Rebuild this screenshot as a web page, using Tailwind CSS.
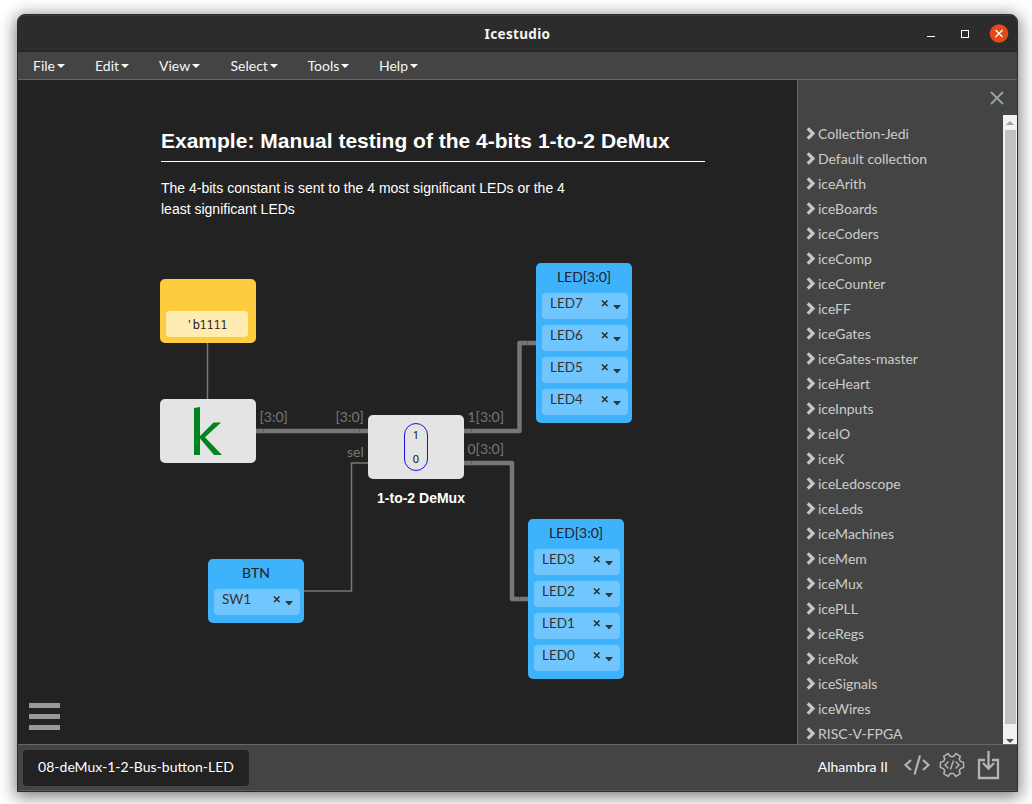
<!DOCTYPE html>
<html lang="en">
<head>
<meta charset="utf-8">
<title>Icestudio</title>
<script src="https://cdn.jsdelivr.net/npm/@tailwindcss/browser@4"></script>
</head>
<body class="bg-white w-[1032px] h-[804px] overflow-hidden pt-[14px] pl-[17px] font-['Lato',sans-serif] text-[14px]">
<svg class="hidden">
  <symbol id="chev" viewBox="0 0 9 13"><path d="M1.800 1.300 7 6.500 1.800 11.700" fill="none" stroke="#c6c6c6" stroke-width="3.300"/></symbol>
</svg>
<div class="w-[1001px] h-[778px] flex flex-col rounded-t-[8px] overflow-hidden border border-[#2b2b2b] bg-[#444] shadow-[0_3px_16px_2px_rgba(0,0,0,0.5)]">
  <header class="h-[37px] shrink-0 bg-[#2c2c2c] border-t border-[#3a3a3a] border-b border-b-[#232323] grid grid-cols-[1fr_auto_1fr] items-center">
    <div></div>
    <h1 class="pt-px font-['Noto_Sans',sans-serif] font-bold text-[13.500px] tracking-[0.350px] text-[#f4f4f4]">Icestudio</h1>
    <svg class="justify-self-end mr-[8px]" width="84" height="20" viewBox="925 23.500 84 20">
      <path d="M927 36h8" stroke="#fff"/>
      <rect x="961.500" y="30" width="7" height="7" fill="none" stroke="#fff"/>
      <circle cx="999" cy="33" r="9.300" fill="#e24a18"/>
      <path d="M995.500 29.500l7 7M1002.500 29.500l-7 7" stroke="#fff" stroke-width="1.400"/>
    </svg>
  </header>
  <nav class="h-[28px] shrink-0 border-b border-[#666] flex items-center text-[#f4f4f4] pl-[15px]">
    <div class="w-[62px] flex items-center gap-[2px]">File<i class="mt-px border-x-4 border-x-transparent border-t-4 border-t-white"></i></div>
    <div class="w-[64px] flex items-center gap-[2px]">Edit<i class="mt-px border-x-4 border-x-transparent border-t-4 border-t-white"></i></div>
    <div class="w-[71.500px] flex items-center gap-[2px]">View<i class="mt-px border-x-4 border-x-transparent border-t-4 border-t-white"></i></div>
    <div class="w-[77px] flex items-center gap-[2px]">Select<i class="mt-px border-x-4 border-x-transparent border-t-4 border-t-white"></i></div>
    <div class="w-[71.500px] flex items-center gap-[2px]">Tools<i class="mt-px border-x-4 border-x-transparent border-t-4 border-t-white"></i></div>
    <div class="flex items-center gap-[2px]">Help<i class="mt-px border-x-4 border-x-transparent border-t-4 border-t-white"></i></div>
  </nav>
  <main class="h-[664px] shrink-0 flex">
    <section class="relative w-[779px] bg-[#222] overflow-hidden">
      <svg class="absolute inset-0" width="779" height="664" viewBox="18 80 779 664" fill="none">
        <g stroke="#777">
          <path d="M207.500 342V400M303 591H351.500V463H369" stroke-width="1.500"/>
          <path d="M255 431H369M463 431H519.500V343H537M463 463H512V599H529" stroke-width="4.500" stroke-linejoin="round"/>
        </g>
        <path d="M263.500 429v4M359.500 429v4M471.500 429v4M471.500 461v4M527.500 341v4M519.500 597v4" stroke="#606060"/>
      </svg>
      <article class="absolute left-[143px] top-[47px] w-[544px] font-['Liberation_Sans',sans-serif] text-white">
        <h2 class="h-[35px] border-b border-white font-bold text-[21px] leading-[28px]">Example: Manual testing of the 4-bits 1-to-2 DeMux</h2>
        <p class="mt-[16px] w-[420px] leading-[21px]">The 4-bits constant is sent to the 4 most significant LEDs or the 4 least significant LEDs</p>
      </article>
      <div class="absolute left-[142px] top-[199px] w-[96px] h-[64px] rounded-[5px] bg-[#ffcc40] pt-[32px] pl-[6px]">
        <div class="w-[82px] h-[26px] rounded-[4px] bg-[#ffecb3] text-center font-['Noto_Sans_Mono','DejaVu_Sans_Mono',monospace] text-[12px] tracking-[-0.300px] leading-[27px] text-[#222] pr-[1px]">'b1111</div>
      </div>
      <div class="absolute left-[142px] top-[319px] w-[96px] h-[64px] rounded-[5px] bg-[#e4e4e4]">
        <svg width="96" height="64" viewBox="160 399 96 64" fill="#008420"><path d="M194 408l6-1v48h-6zM200 436L213.500 422.500H221L205 437.300 222 455h-8L200 438.500z"/></svg>
      </div>
      <div class="absolute left-[350px] top-[335px] w-[96px] h-[64px] rounded-[5px] bg-[#e4e4e4] flex justify-center pt-[8px]">
        <div class="w-[24px] h-[48px] rounded-full border border-[#2010e0] flex flex-col items-center font-['Noto_Sans',sans-serif] text-[11px] leading-[24px] text-[#111]"><span class="-mt-px">1</span><span>0</span></div>
      </div>
      <div class="absolute left-[355px] top-[409px] w-[96px] text-center font-['Liberation_Sans',sans-serif] font-bold text-[14px] leading-[18px] text-white whitespace-nowrap">1-to-2 DeMux</div>
      <div class="absolute left-[241.500px] top-[328px] leading-[18px] text-[#777]">[3:0]</div>
      <div class="absolute left-[317.500px] top-[328px] leading-[18px] text-[#777]">[3:0]</div>
      <div class="absolute left-[329px] top-[363px] leading-[18px] text-[#777]">sel</div>
      <div class="absolute left-[449.500px] top-[328px] leading-[18px] text-[#777]">1[3:0]</div>
      <div class="absolute left-[449.500px] top-[360px] leading-[18px] text-[#777]">0[3:0]</div>

      <div data-node="LED[3:0]" data-pins="LED7,LED6,LED5,LED4" class="absolute left-[518px] top-[183px] w-[96px] h-[160px] rounded-[5px] bg-[#3eb2fb]"></div>
      <div data-node="LED[3:0]" data-pins="LED3,LED2,LED1,LED0" class="absolute left-[510px] top-[439px] w-[96px] h-[160px] rounded-[5px] bg-[#3eb2fb]"></div>
      <div data-node="BTN" data-pins="SW1" class="absolute left-[190px] top-[479px] w-[96px] h-[64px] rounded-[5px] bg-[#3eb2fb]"></div>

      <div class="absolute left-[11px] top-[623px] w-[31px] flex flex-col gap-[6px]">
        <i class="h-[5px] bg-[#999]"></i><i class="h-[5px] bg-[#999]"></i><i class="h-[5px] bg-[#999]"></i>
      </div>
    </section>
    <aside class="w-[220px] border-l border-[#666] flex flex-col">
      <div class="h-[35px] shrink-0 flex justify-end items-center pr-[13px] pt-[1px]">
        <svg width="14" height="14" viewBox="0 0 14 14" stroke="#95a5a6" stroke-width="1.900"><path d="M1 1l12 12M13 1L1 13"/></svg>
      </div>
      <div class="h-[629px] flex overflow-hidden">
        <ul id="tree" class="flex-1 pt-[6px] pl-[8px] text-[#ccc]"></ul>
        <div class="w-[14px] bg-[#f1f1f1] flex flex-col items-center">
          <div class="h-[15px] pt-[6px]"><i class="block border-x-[4px] border-x-transparent border-b-4 border-b-[#a0a0a0]"></i></div>
          <div class="w-[11px] h-[594px] bg-[#c1c1c1]"></div>
          <div class="h-[20px] pt-[15px]"><i class="block border-x-[4px] border-x-transparent border-t-4 border-t-[#505050]"></i></div>
        </div>
      </div>
    </aside>
  </main>
  <footer class="h-[47px] shrink-0 border-t border-[#666] border-b border-b-[#5a5a5a] flex items-center pl-[5px]">
    <div class="w-[226px] h-[36px] rounded-[4px] bg-[#222] text-white text-center leading-[33px]">08-deMux-1-2-Bus-button-LED</div>
    <div class="ml-auto pb-[2px] text-white">Alhambra II</div>
    <svg class="ml-[12px] mr-[13px]" width="104" height="40" viewBox="900 748 104 40" fill="none" stroke="#b4b4b4">
      <path d="M911 760l-5.500 5 5.500 5M923 760l5.500 5-5.500 5M920 755.500l-5.500 19" stroke-width="2.200"/>
      <path d="M960.500 768.600L963.600 767.500V762.500L960.500 761.400L959.200 759.100L960.300 756.400L956 753.600L953.600 756.400H950.400L948 753.600L943.700 756.400L944.800 759.100L943.500 761.400L940.400 762.500V767.500L943.500 768.600L944.800 770.900L943.700 773.600L948 776.400L950.400 773.600H953.600L956 776.400L960.300 773.600L959.200 770.900Z" stroke-width="1.500" stroke-linejoin="round"/>
      <path d="M948.500 761.500l-3.500 3.500 3.500 3.500M955.500 761.500l3.500 3.500-3.500 3.500M953.500 760.500l-3 9" stroke-width="1.400"/>
      <path d="M985 760h-6v18h19v-18h-6M988.500 751v17M983 763l5.500 5.500 5.500-5.500" stroke-width="2.300"/>
    </svg>
  </footer>
</div>
<script>
const items = ['Collection-Jedi','Default collection','iceArith','iceBoards','iceCoders','iceComp','iceCounter','iceFF','iceGates','iceGates-master','iceHeart','iceInputs','iceIO','iceK','iceLedoscope','iceLeds','iceMachines','iceMem','iceMux','icePLL','iceRegs','iceRok','iceSignals','iceWires','RISC-V-FPGA'];
document.getElementById('tree').innerHTML = items.map(t => `<li class="h-[25px] flex items-center gap-[3px] whitespace-nowrap"><svg width="9" height="13"><use href="#chev"/></svg>${t}</li>`).join('');
document.querySelectorAll('[data-node]').forEach(n => {
  n.innerHTML = `<div class="h-[30px] text-center leading-[28px] text-[#222]">${n.dataset.node}</div>` +
    n.dataset.pins.split(',').map(p => `<div class="mb-[6px] ml-[6px] w-[86px] h-[26px] rounded-[4px] bg-[#71c6fd] flex items-start pl-[8px] text-[#333]"><span class="w-[50px] text-[13.500px] leading-[21px]">${p}</span><svg width="24" height="24" viewBox="0 0 24 24"><path d="M2 7.500l5.500 5.500M7.500 7.500l-5.500 5.500" stroke="#333" stroke-width="1.700"/><path d="M13 12h8l-4 4.500z" fill="#333"/></svg></div>`).join('');
});
</script>
</body>
</html>
